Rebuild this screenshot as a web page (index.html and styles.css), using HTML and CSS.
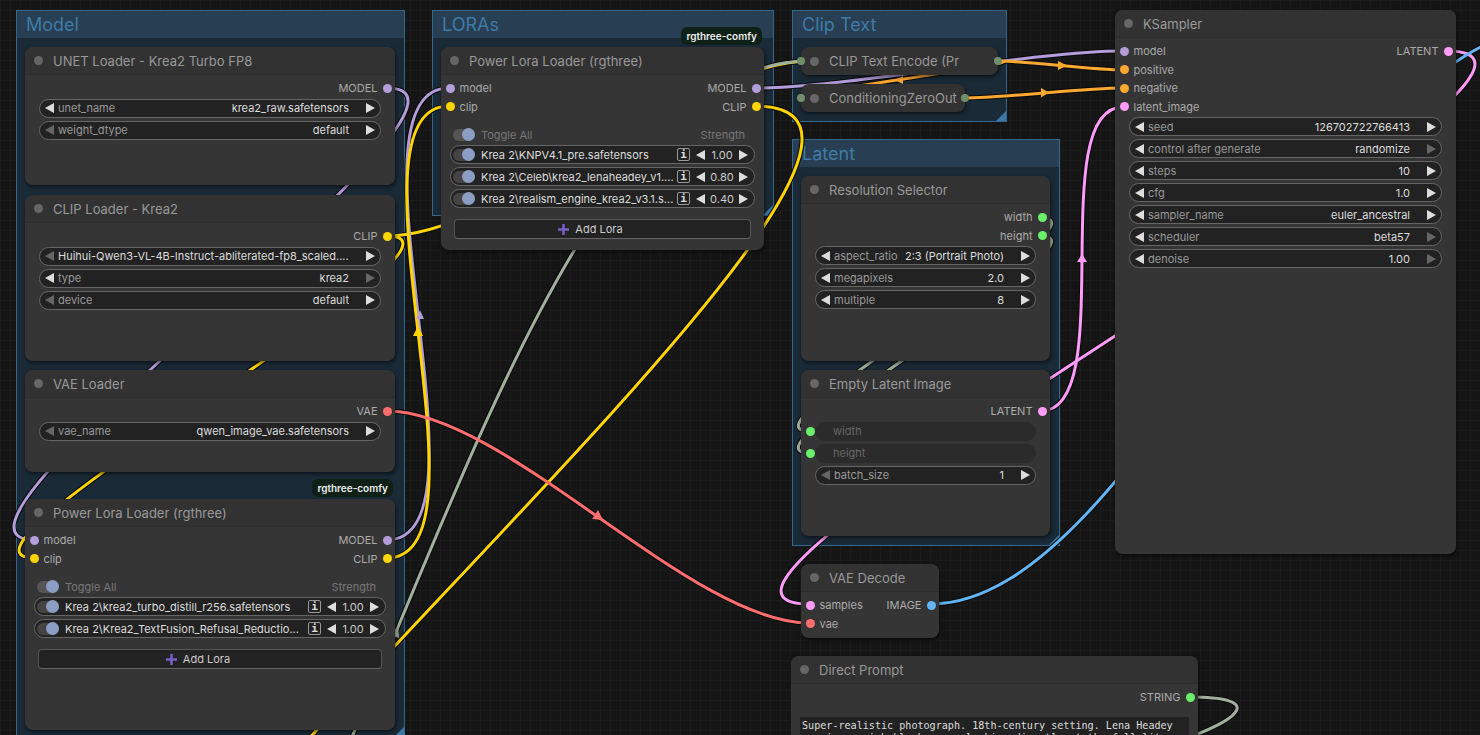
FILE: index.html
```html
<!DOCTYPE html>
<html lang="en">
<head>
  <meta charset="UTF-8" />
  <meta name="viewport" content="width=device-width, initial-scale=1.0"/>
  <title>Krea2 Workflow</title>
  <link rel="stylesheet" href="styles.css">
</head>
<body>
<div class="canvas">

  <!-- groups sit under the wires -->
  <div class="group group-model"><div class="group-title">Model</div></div>
  <div class="group group-loras"><div class="group-title">LORAs</div></div>
  <div class="group group-clip"><div class="group-title">Clip Text</div></div>
  <div class="group group-latent"><div class="group-title">Latent</div></div>

  <svg class="wires" width="1480" height="735" viewBox="0 0 1480 735">
    <defs>
      <path id="w1" d="M387 88C530 88 -108 540 35 540"/>
      <path id="w2" d="M387 236C506 236 -84 558 35 558"/>
      <path id="w3" d="M387 540C501 540 335 88 449 88"/>
      <path id="w4" d="M387 558C501 558 335 106 449 106"/>
      <path id="w5" d="M387 236C501 236 695 61 809 61"/>
      <path id="w6" d="M-17 1203C335 1203 457 61 809 61"/>
      <path id="w7" d="M755 106C1050 106 -150 1070 140 1070"/>
      <path id="w8" d="M755 88C847 88 1031 51 1123 51"/>
      <path id="w9" d="M998 61C1029 61 1092 70 1123 70"/>
      <path id="w10" d="M965 98C1005 98 1083 88 1123 88"/>
      <path id="w11" d="M998 61C1046 61 761 97 809 97"/>
      <path id="w12" d="M1041 411C1120 411 1044 107 1123 107"/>
      <path id="w13" d="M1447 51C1658 51 598 604 809 604"/>
      <path id="w14" d="M931 604C1141 604 1335 30 1545 30"/>
      <path id="w15" d="M387 411C505 411 691 623 809 623"/>
      <path id="w16" d="M1041 218C1120 218 730 431 809 431"/>
      <path id="w17" d="M1041 236C1120 236 730 453 809 453"/>
      <path id="w18" d="M1189 697C1265 697 1240 718 1190 737"/>
    </defs>

    <g class="wire-under">
      <use href="#w1"/><use href="#w2"/><use href="#w3"/><use href="#w4"/><use href="#w5"/><use href="#w6"/>
      <use href="#w7"/><use href="#w8"/><use href="#w9"/><use href="#w10"/><use href="#w11"/><use href="#w12"/>
      <use href="#w13"/><use href="#w14"/><use href="#w15"/><use href="#w16"/><use href="#w17"/><use href="#w18"/>
    </g>

    <use href="#w5" class="w-clip"/>
    <use href="#w6" class="w-str"/>
    <use href="#w1" class="w-model"/>
    <use href="#w2" class="w-clip"/>
    <use href="#w3" class="w-model"/>
    <use href="#w4" class="w-clip"/>
    <use href="#w7" class="w-clip"/>
    <use href="#w8" class="w-model"/>
    <use href="#w11" class="w-cond"/>
    <use href="#w9" class="w-cond"/>
    <use href="#w10" class="w-cond"/>
    <use href="#w12" class="w-latent"/>
    <use href="#w13" class="w-latent"/>
    <use href="#w14" class="w-image"/>
    <use href="#w15" class="w-vae"/>
    <use href="#w16" class="w-str"/>
    <use href="#w17" class="w-str"/>
    <use href="#w18" class="w-str"/>

    <!-- midpoint arrows -->
    <polygon class="a-model" points="420,310 416,319 424,319"/>
    <polygon class="a-clip" points="418,326 413,336 423,336"/>
    <polygon class="a-str" points="398,627 399,638 390,634"/>
    <polygon class="a-cond" points="1067,65.5 1058,61 1058,70"/>
    <polygon class="a-cond" points="1049,92.5 1041,88 1041,97.5"/>
    <polygon class="a-cond" points="895,80 903,76 903,84"/>
    <polygon class="a-latent" points="1082,254 1077,262 1087,262"/>
    <polygon class="a-vae" points="603,520 592,519 598,510"/>
  </svg>

  <!-- UNET loader -->
  <div class="node node-unet">
    <div class="node-title"><span class="title-dot"></span>UNET Loader - Krea2 Turbo FP8</div>
    <div class="node-body">
      <div class="slot-row"><span></span><span class="slot-out">MODEL<i class="dot c-model"></i></span></div>
      <div class="widgets">
        <div class="pill"><i class="tri-l"></i><span class="pill-label">unet_name</span><span class="pill-value">krea2_raw.safetensors</span><i class="tri-r"></i></div>
        <div class="pill"><i class="tri-l off"></i><span class="pill-label">weight_dtype</span><span class="pill-value">default</span><i class="tri-r"></i></div>
      </div>
    </div>
  </div>

  <!-- CLIP loader -->
  <div class="node node-cliploader">
    <div class="node-title"><span class="title-dot"></span>CLIP Loader - Krea2</div>
    <div class="node-body">
      <div class="slot-row"><span></span><span class="slot-out">CLIP<i class="dot c-clip"></i></span></div>
      <div class="widgets">
        <div class="pill"><i class="tri-l off"></i><span class="pill-value wide">Huihui-Qwen3-VL-4B-Instruct-abliterated-fp8_scaled....</span><i class="tri-r"></i></div>
        <div class="pill"><i class="tri-l"></i><span class="pill-label">type</span><span class="pill-value">krea2</span><i class="tri-r off"></i></div>
        <div class="pill"><i class="tri-l off"></i><span class="pill-label">device</span><span class="pill-value">default</span><i class="tri-r"></i></div>
      </div>
    </div>
  </div>

  <!-- VAE loader -->
  <div class="node node-vaeloader">
    <div class="node-title"><span class="title-dot"></span>VAE Loader</div>
    <div class="node-body">
      <div class="slot-row"><span></span><span class="slot-out">VAE<i class="dot c-vae"></i></span></div>
      <div class="widgets">
        <div class="pill"><i class="tri-l off"></i><span class="pill-label">vae_name</span><span class="pill-value">qwen_image_vae.safetensors</span><i class="tri-r"></i></div>
      </div>
    </div>
  </div>

  <!-- Lora loader, left column -->
  <div class="node node-lora-a">
    <span class="badge">rgthree-comfy</span>
    <div class="node-title"><span class="title-dot"></span>Power Lora Loader (rgthree)</div>
    <div class="node-body">
      <div class="slot-row"><span class="slot-in"><i class="dot c-model"></i>model</span><span class="slot-out">MODEL<i class="dot c-model"></i></span></div>
      <div class="slot-row"><span class="slot-in"><i class="dot c-clip"></i>clip</span><span class="slot-out">CLIP<i class="dot c-clip"></i></span></div>
      <div class="lora-head"><i class="toggle"></i><span class="lora-head-label">Toggle All</span><span>Strength</span></div>
      <div class="widgets">
        <div class="pill lora"><i class="toggle"></i><span class="lora-name">Krea 2\krea2_turbo_distill_r256.safetensors</span><span class="info">i</span><i class="tri-l"></i><span class="lora-val">1.00</span><i class="tri-r"></i></div>
        <div class="pill lora"><i class="toggle"></i><span class="lora-name">Krea 2\Krea2_TextFusion_Refusal_Reductio...</span><span class="info">i</span><i class="tri-l"></i><span class="lora-val">1.00</span><i class="tri-r"></i></div>
      </div>
      <div class="add-lora"><svg width="11" height="11" viewBox="0 0 11 11"><path d="M5.5 0V11M0 5.5H11"/></svg>Add Lora</div>
    </div>
  </div>

  <!-- Lora loader, top -->
  <div class="node node-lora-b">
    <span class="badge">rgthree-comfy</span>
    <div class="node-title"><span class="title-dot"></span>Power Lora Loader (rgthree)</div>
    <div class="node-body">
      <div class="slot-row"><span class="slot-in"><i class="dot c-model"></i>model</span><span class="slot-out">MODEL<i class="dot c-model"></i></span></div>
      <div class="slot-row"><span class="slot-in"><i class="dot c-clip"></i>clip</span><span class="slot-out">CLIP<i class="dot c-clip"></i></span></div>
      <div class="lora-head"><i class="toggle"></i><span class="lora-head-label">Toggle All</span><span>Strength</span></div>
      <div class="widgets">
        <div class="pill lora"><i class="toggle"></i><span class="lora-name">Krea 2\KNPV4.1_pre.safetensors</span><span class="info">i</span><i class="tri-l"></i><span class="lora-val">1.00</span><i class="tri-r"></i></div>
        <div class="pill lora"><i class="toggle"></i><span class="lora-name">Krea 2\Celeb\krea2_lenaheadey_v1....</span><span class="info">i</span><i class="tri-l"></i><span class="lora-val">0.80</span><i class="tri-r"></i></div>
        <div class="pill lora"><i class="toggle"></i><span class="lora-name">Krea 2\realism_engine_krea2_v3.1.s...</span><span class="info">i</span><i class="tri-l"></i><span class="lora-val">0.40</span><i class="tri-r"></i></div>
      </div>
      <div class="add-lora"><svg width="11" height="11" viewBox="0 0 11 11"><path d="M5.5 0V11M0 5.5H11"/></svg>Add Lora</div>
    </div>
  </div>

  <!-- collapsed nodes -->
  <div class="node collapsed node-encode">
    <i class="edge-dot edge-in"></i><span class="title-dot"></span>CLIP Text Encode (Pr<i class="edge-dot edge-out"></i>
  </div>
  <div class="node collapsed node-zero">
    <i class="edge-dot edge-in"></i><span class="title-dot"></span>ConditioningZeroOut<i class="edge-dot edge-out"></i>
  </div>

  <!-- KSampler -->
  <div class="node node-sampler">
    <div class="node-title"><span class="title-dot"></span>KSampler</div>
    <div class="node-body">
      <div class="slot-row"><span class="slot-in"><i class="dot c-model"></i>model</span><span class="slot-out">LATENT<i class="dot c-latent"></i></span></div>
      <div class="slot-row"><span class="slot-in"><i class="dot c-cond"></i>positive</span></div>
      <div class="slot-row"><span class="slot-in"><i class="dot c-cond"></i>negative</span></div>
      <div class="slot-row"><span class="slot-in"><i class="dot c-latent"></i>latent_image</span></div>
      <div class="widgets">
        <div class="pill"><i class="tri-l"></i><span class="pill-label">seed</span><span class="pill-value">126702722766413</span><i class="tri-r"></i></div>
        <div class="pill"><i class="tri-l"></i><span class="pill-label">control after generate</span><span class="pill-value">randomize</span><i class="tri-r off"></i></div>
        <div class="pill"><i class="tri-l"></i><span class="pill-label">steps</span><span class="pill-value">10</span><i class="tri-r"></i></div>
        <div class="pill"><i class="tri-l"></i><span class="pill-label">cfg</span><span class="pill-value">1.0</span><i class="tri-r"></i></div>
        <div class="pill"><i class="tri-l"></i><span class="pill-label">sampler_name</span><span class="pill-value">euler_ancestral</span><i class="tri-r"></i></div>
        <div class="pill"><i class="tri-l"></i><span class="pill-label">scheduler</span><span class="pill-value">beta57</span><i class="tri-r off"></i></div>
        <div class="pill"><i class="tri-l"></i><span class="pill-label">denoise</span><span class="pill-value">1.00</span><i class="tri-r off"></i></div>
      </div>
    </div>
  </div>

  <!-- Resolution selector -->
  <div class="node node-resolution">
    <div class="node-title"><span class="title-dot"></span>Resolution Selector</div>
    <div class="node-body">
      <div class="slot-row"><span></span><span class="slot-out">width<i class="dot c-int"></i></span></div>
      <div class="slot-row"><span></span><span class="slot-out">height<i class="dot c-int"></i></span></div>
      <div class="widgets">
        <div class="pill"><i class="tri-l"></i><span class="pill-label">aspect_ratio</span><span class="pill-value">2:3 (Portrait Photo)</span><i class="tri-r"></i></div>
        <div class="pill"><i class="tri-l"></i><span class="pill-label">megapixels</span><span class="pill-value">2.0</span><i class="tri-r"></i></div>
        <div class="pill"><i class="tri-l"></i><span class="pill-label">multiple</span><span class="pill-value">8</span><i class="tri-r"></i></div>
      </div>
    </div>
  </div>

  <!-- Empty latent -->
  <div class="node node-empty">
    <div class="node-title"><span class="title-dot"></span>Empty Latent Image</div>
    <div class="node-body">
      <div class="slot-row"><span></span><span class="slot-out">LATENT<i class="dot c-latent"></i></span></div>
      <div class="widgets">
        <div class="pill linked"><i class="dot c-int"></i><span class="pill-label">width</span></div>
        <div class="pill linked"><i class="dot c-int"></i><span class="pill-label">height</span></div>
        <div class="pill"><i class="tri-l off"></i><span class="pill-label">batch_size</span><span class="pill-value">1</span><i class="tri-r"></i></div>
      </div>
    </div>
  </div>

  <!-- VAE decode -->
  <div class="node node-decode">
    <div class="node-title"><span class="title-dot"></span>VAE Decode</div>
    <div class="node-body">
      <div class="slot-row"><span class="slot-in"><i class="dot c-latent"></i>samples</span><span class="slot-out">IMAGE<i class="dot c-image"></i></span></div>
      <div class="slot-row"><span class="slot-in"><i class="dot c-vae"></i>vae</span></div>
    </div>
  </div>

  <!-- Direct prompt, runs off the bottom of the window -->
  <div class="node node-prompt">
    <div class="node-title"><span class="title-dot"></span>Direct Prompt</div>
    <div class="node-body">
      <div class="slot-row"><span></span><span class="slot-out">STRING<i class="dot c-int"></i></span></div>
      <div class="prompt-text">Super-realistic photograph. 18th-century setting. Lena Headey
wearing a rich black gown, looking directly at the full-lit</div>
    </div>
  </div>

</div>
</body>
</html>
```

FILE: styles.css
```css
* {
  box-sizing: border-box;
}

body {
  margin: 0;
  background-color: #141414;
  font-family: Inter, "Liberation Sans", sans-serif;
  overflow: hidden;
}

.canvas {
  position: relative;
  width: 1480px;
  height: 735px;
  overflow: hidden;
  background-color: #151515;
  background-image:
    linear-gradient(#1b1b1b 1px, transparent 1px),
    linear-gradient(90deg, #1b1b1b 1px, transparent 1px);
  background-size: 10px 10px;
}

/* groups */
.group {
  position: absolute;
  background-color: #1a2a37;
  border: 1px solid #33688c;
}

.group::after {
  content: "";
  position: absolute;
  right: 0;
  bottom: 0;
  border-style: solid;
  border-width: 0 0 10px 10px;
  border-color: transparent transparent #3b77a8 transparent;
}

.group-title {
  height: 27px;
  padding: 2px 8px 0 9px;
  background-color: #283e53;
  color: #3f7ba6;
  font-size: 18px;
  line-height: 24px;
}

.group-model  { left: 16px;  top: 10px;  width: 389px; height: 728px; }
.group-loras  { left: 432px; top: 10px;  width: 342px; height: 206px; }
.group-clip   { left: 792px; top: 10px;  width: 215px; height: 112px; }
.group-latent { left: 792px; top: 139px; width: 268px; height: 407px; }

/* wires */
.wires {
  position: absolute;
  left: 0;
  top: 0;
}

.wires defs path {
  fill: none;
}

.wire-under {
  stroke: #0a0a0a;
  stroke-width: 5;
}

.w-model, .w-clip, .w-str, .w-cond, .w-latent, .w-image, .w-vae {
  stroke-width: 3;
}

.w-model  { stroke: #b39ddb; }
.w-clip   { stroke: #ffd500; }
.w-str    { stroke: #a0b09c; }
.w-cond   { stroke: #ffa931; }
.w-latent { stroke: #ff9cf9; }
.w-image  { stroke: #64b5f6; }
.w-vae    { stroke: #ff6e6e; }

.a-model  { fill: #b39ddb; }
.a-clip   { fill: #ffd500; }
.a-str    { fill: #a0b09c; }
.a-cond   { fill: #ffa931; }
.a-latent { fill: #ff9cf9; }
.a-vae    { fill: #ff6e6e; }

/* nodes */
.node {
  position: absolute;
  background-color: #353535;
  border-radius: 8px;
  box-shadow: 1px 2px 4px rgba(0, 0, 0, 0.55);
}

.node-unet       { left: 25px;   top: 47px;  width: 370px; height: 138px; }
.node-cliploader { left: 25px;   top: 195px; width: 370px; height: 166px; }
.node-vaeloader  { left: 25px;   top: 370px; width: 370px; height: 102px; }
.node-lora-a     { left: 25px;   top: 499px; width: 370px; height: 231px; }
.node-lora-b     { left: 441px;  top: 47px;  width: 323px; height: 203px; }
.node-encode     { left: 801px;  top: 47px;  width: 197px; }
.node-zero       { left: 801px;  top: 84px;  width: 164px; }
.node-sampler    { left: 1115px; top: 10px;  width: 341px; height: 544px; }
.node-resolution { left: 801px;  top: 176px; width: 249px; height: 185px; }
.node-empty      { left: 801px;  top: 370px; width: 249px; height: 166px; }
.node-decode     { left: 801px;  top: 564px; width: 138px; height: 74px; }
.node-prompt     { left: 791px;  top: 656px; width: 407px; height: 120px; }

.node-title {
  display: flex;
  align-items: center;
  height: 28px;
  padding-left: 9px;
  background-color: #323232;
  border-bottom: 1px solid #2d2d2d;
  border-radius: 8px 8px 0 0;
  color: #999;
  font-size: 13px;
}

.title-dot {
  flex: none;
  width: 9px;
  height: 9px;
  margin-right: 10px;
  border-radius: 50%;
  background-color: #666;
}

.node-body {
  padding-top: 4px;
}

.slot-row {
  display: flex;
  justify-content: space-between;
  align-items: center;
  height: 18.5px;
  padding: 0 3.5px 0 4.5px;
  color: #aaa;
  font-size: 11px;
}

.slot-in, .slot-out {
  display: flex;
  align-items: center;
  gap: 5px;
}

.dot {
  flex: none;
  width: 9px;
  height: 9px;
  border-radius: 50%;
}

.c-model  { background-color: #b39ddb; }
.c-clip   { background-color: #ffd500; }
.c-vae    { background-color: #ff6e6e; }
.c-cond   { background-color: #ffa931; }
.c-latent { background-color: #ff9cf9; }
.c-image  { background-color: #64b5f6; }
.c-int    { background-color: #6bf06b; }

/* widgets */
.widgets {
  display: flex;
  flex-direction: column;
  gap: 3px;
  margin: 1px 14px 0;
}

.pill {
  display: flex;
  align-items: center;
  height: 19px;
  padding: 0 5px;
  background-color: #222;
  border: 1px solid #666;
  border-radius: 10px;
  font-size: 11px;
  white-space: nowrap;
}

.pill-label {
  flex: 1;
  margin-left: 4px;
  color: #999;
}

.pill-value {
  margin-right: 17px;
  color: #ddd;
}

.pill-value.wide {
  flex: 1;
  margin-left: 4px;
}

.tri-l, .tri-r {
  flex: none;
  width: 0;
  height: 0;
  border-top: 5px solid transparent;
  border-bottom: 5px solid transparent;
}

.tri-l {
  border-right: 9px solid #ddd;
}

.tri-r {
  border-left: 9px solid #ddd;
}

.tri-l.off {
  border-right-color: #666;
}

.tri-r.off {
  border-left-color: #666;
}

.pill.linked {
  position: relative;
  padding-left: 17px;
  background-color: #2b2b2b;
  border-color: #2b2b2b;
}

.pill.linked .pill-label {
  margin-left: 0;
  color: #666;
}

.pill.linked .dot {
  position: absolute;
  left: -10px;
  top: 4px;
}

/* lora rows */
.toggle {
  position: relative;
  flex: none;
  display: block;
  width: 22px;
  height: 12px;
  border-radius: 6px;
  background-color: #444;
}

.toggle::after {
  content: "";
  position: absolute;
  right: 0;
  top: -1px;
  width: 13px;
  height: 13px;
  border-radius: 50%;
  background-color: #8c9ec4;
}

.lora-head {
  display: flex;
  align-items: center;
  height: 18px;
  margin-top: 10px;
  padding: 0 19px 0 12px;
  color: #777;
  font-size: 11px;
}

.lora-head .toggle {
  background-color: #555;
}

.lora-head-label {
  flex: 1;
  margin-left: 6px;
}

.pill.lora {
  padding: 0 6px 0 2px;
}

.node-lora-a .widgets, .node-lora-b .widgets {
  margin: 1px 9px 0;
}

.lora-name {
  flex: 1;
  margin-left: 6px;
  color: #ddd;
}

.info {
  flex: none;
  width: 13px;
  height: 13px;
  margin-right: 6px;
  border: 1px solid #999;
  border-radius: 2px;
  color: #ddd;
  font-family: "DejaVu Sans Mono", monospace;
  font-size: 11px;
  font-weight: bold;
  line-height: 11px;
  text-align: center;
}

.lora-val {
  width: 34px;
  color: #ccc;
  text-align: center;
}

.add-lora {
  display: flex;
  justify-content: center;
  align-items: center;
  gap: 6px;
  height: 20px;
  margin: 11px 13px 0;
  padding-right: 24px;
  background-color: #222;
  border: 1px solid #555;
  border-bottom-color: #666;
  border-radius: 4px;
  color: #ccc;
  font-size: 11px;
}

.add-lora svg path {
  fill: none;
  stroke: #7a5fc8;
  stroke-width: 2.5;
}

.badge {
  position: absolute;
  right: 2px;
  top: -20px;
  padding: 2px 5px;
  background-color: #0f2016;
  border-radius: 6px;
  color: #eee;
  font-size: 10px;
  font-weight: 600;
  line-height: 14px;
}

/* collapsed */
.collapsed {
  display: flex;
  align-items: center;
  height: 28px;
  padding-left: 9px;
  background-color: #323232;
  color: #999;
  font-size: 13px;
  white-space: nowrap;
}

.edge-dot {
  position: absolute;
  top: 10px;
  width: 8px;
  height: 8px;
  border-radius: 50%;
  background-color: #6f8f68;
}

.edge-in {
  left: -4px;
}

.edge-out {
  right: -4px;
}

/* prompt */
.prompt-text {
  height: 60px;
  margin: 10px 9px 0;
  padding: 3px 2px;
  background-color: #222;
  color: #ddd;
  font-family: "DejaVu Sans Mono", monospace;
  font-size: 10.1px;
  line-height: 12px;
  white-space: pre;
}
```
